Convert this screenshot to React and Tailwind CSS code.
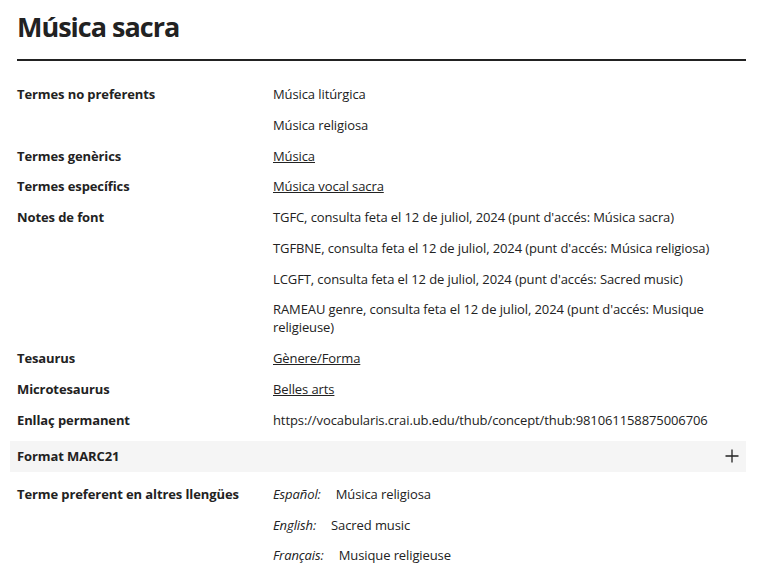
import React from 'react';

const rows = [
  { label: 'Termes no preferents', values: ['Música litúrgica', 'Música religiosa'] },
  { label: 'Termes genèrics', values: [{ link: 'Música' }] },
  { label: 'Termes específics', values: [{ link: 'Música vocal sacra' }] },
  {
    label: 'Notes de font',
    values: [
      "TGFC, consulta feta el 12 de juliol, 2024 (punt d'accés: Música sacra)",
      "TGFBNE, consulta feta el 12 de juliol, 2024 (punt d'accés: Música religiosa)",
      "LCGFT, consulta feta el 12 de juliol, 2024 (punt d'accés: Sacred music)",
      "RAMEAU genre, consulta feta el 12 de juliol, 2024 (punt d'accés: Musique religieuse)",
    ],
  },
  { label: 'Tesaurus', values: [{ link: 'Gènere/Forma' }] },
  { label: 'Microtesaurus', values: [{ link: 'Belles arts' }] },
  { label: 'Enllaç permanent', values: ['https://vocabularis.crai.ub.edu/thub/concept/thub:981061158875006706'] },
];

const langs = [
  ['Español:', 'Música religiosa'],
  ['English:', 'Sacred music'],
  ['Français:', 'Musique religieuse'],
];

function Row({ label, children }) {
  return (
    <div className="flex pl-[7px]">
      <div className="w-[256px] shrink-0 py-[6.4px] font-bold leading-[18px]">{label}</div>
      <div className="flex-1 min-w-0">{children}</div>
    </div>
  );
}

function Value({ children }) {
  return <div className="py-[6.4px] leading-[18px] pr-[30px]">{children}</div>;
}

export default function App() {
  return (
    <div className="bg-white text-[#222] text-[13px] tracking-[-0.1px] min-h-screen" style={{ fontFamily: '"Open Sans", "Liberation Sans", sans-serif' }}>
      <div className="ml-[10px] w-[736px]">
        <div className="ml-[7px] pt-2 pb-[13px] border-b-2 border-[#222]">
          <h1 className="text-[27px] font-bold leading-[38px] tracking-[-1px]">Música sacra</h1>
        </div>

        <div className="mt-[17.6px]">
          {rows.map((r) => (
            <Row key={r.label} label={r.label}>
              {r.values.map((v, i) => (
                <Value key={i}>
                  {typeof v === 'string' ? v : <a href="#" className="underline">{v.link}</a>}
                </Value>
              ))}
            </Row>
          ))}
        </div>

        <div className="mt-[5.6px] mb-[6.6px] h-[31px] bg-[#f5f5f5] flex items-center justify-between pl-[7px] pr-[7px]">
          <span className="font-bold">Format MARC21</span>
          <svg width="14" height="14" viewBox="0 0 14 14" className="text-[#222]">
            <path d="M7 0.5V13.5M0.5 7H13.5" stroke="currentColor" strokeWidth="1.3" fill="none" />
          </svg>
        </div>

        <Row label="Terme preferent en altres llengües">
          {langs.map(([l, v]) => (
            <Value key={l}>
              <span className="italic mr-[15px]">{l}</span>
              {v}
            </Value>
          ))}
        </Row>
      </div>
    </div>
  );
}
